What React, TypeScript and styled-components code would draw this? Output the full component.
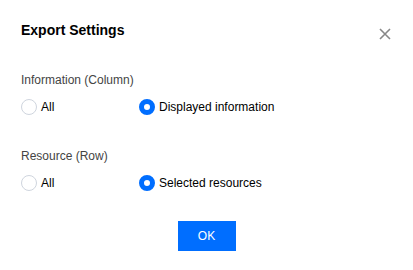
import React, { useState } from 'react'
import styled, { createGlobalStyle } from 'styled-components'

const GlobalStyle = createGlobalStyle`
  html, body {
    margin: 0;
    padding: 0;
    background: #fff;
  }
  body {
    font-family: "Liberation Sans", Arial, sans-serif;
    font-size: 12px;
    color: #000;
  }
`

interface Option {
  value: string
  label: string
}

interface GroupProps {
  title: string
  options: Option[]
  value: string
  onChange: (v: string) => void
}

function RadioGroup(props: GroupProps): JSX.Element {
  const { title, options, value, onChange } = props
  return (
    <Section>
      <Label>{title}</Label>
      <Options>
        {options.map((o) => (
          <RadioItem key={o.value} onClick={() => onChange(o.value)}>
            <Circle checked={o.value === value} />
            <span>{o.label}</span>
          </RadioItem>
        ))}
      </Options>
    </Section>
  )
}

export default function App(): JSX.Element {
  const [info, setInfo] = useState('displayed')
  const [res, setRes] = useState('selected')

  return (
    <>
      <GlobalStyle />
      <Dialog>
        <Header>
          <Title>Export Settings</Title>
          <Close aria-label="close">
            <svg width="12" height="12" viewBox="0 0 12 12">
              <path d="M1 1L11 11M11 1L1 11" stroke="#888" strokeWidth="1.6" />
            </svg>
          </Close>
        </Header>
        <Body>
          <RadioGroup
            title="Information (Column)"
            value={info}
            onChange={setInfo}
            options={[
              { value: 'all', label: 'All' },
              { value: 'displayed', label: 'Displayed information' },
            ]}
          />
          <RadioGroup
            title="Resource (Row)"
            value={res}
            onChange={setRes}
            options={[
              { value: 'all', label: 'All' },
              { value: 'selected', label: 'Selected resources' },
            ]}
          />
        </Body>
        <Footer>
          <PrimaryButton>OK</PrimaryButton>
        </Footer>
      </Dialog>
    </>
  )
}

const Dialog = styled.div`
  box-sizing: border-box;
  width: 413px;
  height: 270px;
  padding: 20px 21px 0 21px;
  background: #fff;
`

const Header = styled.div`
  display: flex;
  align-items: center;
  justify-content: space-between;
  height: 20px;
`

const Title = styled.h3`
  margin: 0;
  font-size: 14px;
  font-weight: 700;
  line-height: 20px;
  color: #000;
`

const Close = styled.button`
  display: flex;
  align-items: center;
  justify-content: center;
  padding: 0;
  margin: 7px 1px 0 0;
  border: 0;
  background: none;
  cursor: pointer;
`

const Body = styled.div`
  display: flex;
  flex-direction: column;
  gap: 30px;
  margin-top: 31px;
`

const Section = styled.div`
  display: flex;
  flex-direction: column;
  gap: 8px;
`

const Label = styled.div`
  font-size: 12px;
  line-height: 18px;
  color: #444;
`

const Options = styled.div`
  display: flex;
`

const RadioItem = styled.label`
  display: flex;
  align-items: center;
  width: 118px;
  height: 20px;
  font-size: 12px;
  color: #000;
  cursor: pointer;
  white-space: nowrap;
`

const Circle = styled.span<{ checked?: boolean }>`
  box-sizing: border-box;
  width: 16px;
  height: 16px;
  margin-right: 4px;
  border-radius: 50%;
  background: #fff;
  border: ${(p) => (p.checked ? '5px solid #006eff' : '1px solid #cfd5de')};
  flex-shrink: 0;
`

const Footer = styled.div`
  display: flex;
  justify-content: center;
  margin-top: 28px;
`

const PrimaryButton = styled.button`
  width: 58px;
  height: 30px;
  border: 0;
  padding: 0;
  background: #006eff;
  color: #fff;
  font-family: "Liberation Sans", Arial, sans-serif;
  font-size: 12px;
  cursor: pointer;
`
